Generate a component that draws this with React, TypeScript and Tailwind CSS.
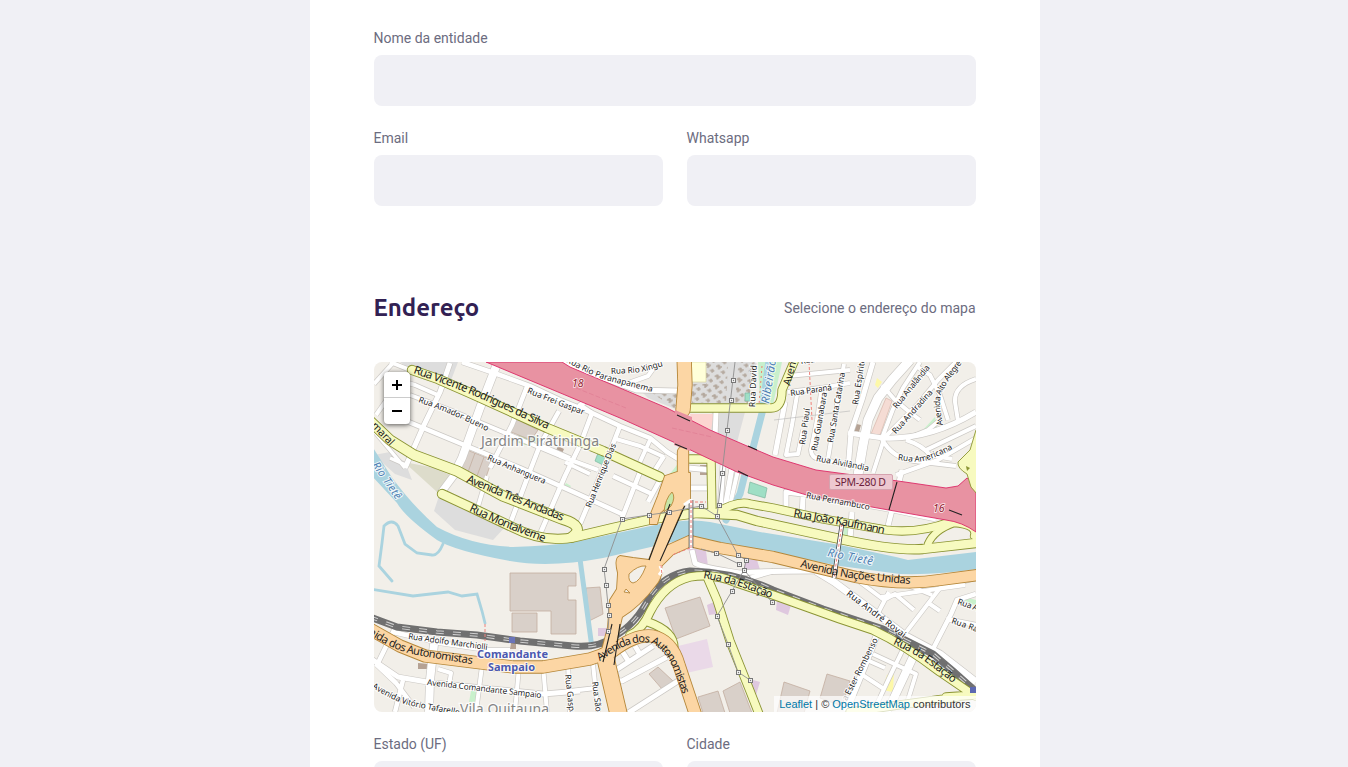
import React from "react";

type Kind = "minor" | "secondary" | "primary";
type Road = { d: string; w: number; k: Kind };
type Label = { t: string; p: number[]; s?: number; c?: string; italic?: boolean };

const STYLE: Record<Kind, { fill: string; edge: string }> = {
  minor: { fill: "#ffffff", edge: "#cbc8c4" },
  secondary: { fill: "#f7fabf", edge: "#8b9434" },
  primary: { fill: "#fcd6a4", edge: "#b5873a" },
};

const minor: [number, string][] = [
  [8, "M497 364L480 408L462 458L453 476"],
  [5, "M450 363L440 392L424 425L405 468"],
  [4.5, "M462 362L497 374L530 386L560 400L590 412"],
  [4.5, "M528 384L512 425L490 468"],
  [4.5, "M559 411L540 445L528 476L510 524"],
  [4.5, "M592 413L580 445L565 476L540 534"],
  [4, "M374 384L392 364"],
  [4, "M390 362L440 382"],
  [4, "M388 377L415 385L440 396"],
  [4, "M410 395L450 410L503 432L560 456L598 470"],
  [4.5, "M404 420L457 442L520 468L578 494L622 514"],
  [4, "M376 415L388 398"],
  [3.5, "M374 431L405 468M390 458L408 466"],
  [7, "M455 474L440 494"],
  [4, "M487 476L477 510"],
  [4.5, "M590 412L620 426L650 438L667 452L680 460"],
  [4.5, "M592 398L580 405L592 413"],
  [4.5, "M620 426L606 462L580 524"],
  [4, "M616 439L640 446L664 457M650 440L640 462"],
  [4, "M565 462L590 474M540 445L570 458"],
  [4.5, "M664 456L655 470M613 476L652 494M640 472L622 518M661 478L648 502"],
  [5, "M563 363L600 377L636 390L677 391"],
  [4, "M658 362L648 376L620 386"],
  [5, "M688 488L712 488M689 468L710 470"],
  [5, "M716 412L715 438M723 465L720 510M732 468L725 508"],
  [4, "M738 470L730 505"],
  [9, "M910 360L892 380L878 398L868 420L863 445L858 475"],
  [4, "M788 392L820 388L850 383M788 376L850 370"],
  [4, "M797 395L792 425L786 455L798 454L803 430"],
  [4, "M822 386L817 420L811 450Q811 458 820 459L850 465"],
  [4, "M844 364L836 410L828 459"],
  [5, "M873 362L862 400L851 432L848 470"],
  [5, "M785 402L775 455"],
  [5, "M848 433L883 438Q930 440 976 412"],
  [4, "M920 362L903 388L893 409L882 438M882 385L895 400L907 410L920 420"],
  [4, "M956 362L938 380L918 404L884 438M938 400L940 420L928 430L906 439"],
  [4, "M916 366L930 375L940 395L948 420"],
  [4, "M976 379Q954 386 955 402L958 421"],
  [4, "M882 439Q892 458 914 461L956 466M926 450L976 426M906 440Q922 445 930 455L952 459M884 439L873 473M896 475L938 460L976 438"],
  [5, "M786 507V492L810 495L888 509L936 519"],
  [5, "M902 470L888 526M852 512L850 540M803 497L802 516"],
  [5, "M692 550L695 563Q700 567 740 573Q760 571 816 571"],
  [7, "M816 571L834 582L873 611L906 636L940 654L976 682"],
  [4.5, "M774 571L740 581L765 587"],
  [4, "M860 582L884 600L895 594L914 610M905 584L932 595M976 578L940 588L904 635M889 592L878 613M927 602L940 611"],
  [4.5, "M976 594L957 600L951 614L933 649M976 625L946 619"],
  [4, "M881 597L965 585"],
  [6, "M878 632L864 668L846 712"],
  [4, "M905 645L891 674L876 706M873 654L916 674L907 703M858 672L884 689M867 660L885 668"],
  [8, "M914 655L892 702L885 714"],
  [4.5, "M395 628L376 667M393 632L440 643L488 650L510 650"],
  [5, "M370 658L398 677L433 683L543 694L580 691"],
  [4.5, "M377 665L396 683L414 707M403 680L395 712"],
  [8, "M434 644L430 680L429 712"],
  [4, "M438 669L451 673L449 685M482 666L476 712M519 667L515 712M543 666L547 712M568 662L570 712M593 664L598 712M570 691L596 688"],
  [5, "M653 646L616 670Q615 682 622 681L667 657M628 713L678 681M622 651L629 662M635 646L641 656"],
];

const secondary: [number, string][] = [
  [9, "M412 370L438 379L470 393L547 428L603 451L660 477"],
  [10, "M369 420L390 440L414 455L457 471L503 496L562 519Q586 526 572 537"],
  [9, "M442 494L470 507L510 526Q545 544 575 537L613 528L653 519L697 513L737 515L757 521L840 539Q895 551 923 549L976 543"],
  [8, "M716 513Q738 500 750 504L773 508L823 519L886 530Q918 534 950 522"],
  [7, "M928 544Q934 530 954 523Q978 525 974 536"],
  [8, "M689 408H771Q782 408 782 390L794 362"],
  [8, "M690 459H711L712 512"],
  [8, "M630 635Q642 630 650 612Q665 583 690 577Q715 573 737 583L773 595L840 619L873 630Q905 645 940 672L975 696M946 697L976 695M850 712L906 704L958 697M648 622Q674 631 674 648"],
  [8, "M708 579L717 600L730 641L750 691L759 714"],
];

const primary: [number, string][] = [
  [14, "M684 355L685 385L683 410"],
  [11, "M683 452V482"],
  [12, "M368 628L400 646L425 656L473 662L513 667L543 667L590 659L613 651Q635 634 652 636Q672 640 679 665L696 716"],
  [11, "M652 568L670 550L690 541L720 548L773 557L856 577Q904 586 940 580L978 575"],
  [17, "M605 656L619 716"],
];

const INTERCHANGE =
  "M677 472L665 476L658 496L650 516V524H657L660 513L670 504L649 560L633 558L620 556Q614 558 618 573L617 589L610 600L608 627L602 650L606 668L614 652L622 617Q640 606 655 586Q665 575 660 561L682 509L690 499V473Z";

const roads: Road[] = [
  ...minor.map(([w, d]) => ({ w, d, k: "minor" as Kind })),
  ...secondary.map(([w, d]) => ({ w, d, k: "secondary" as Kind })),
  ...primary.map(([w, d]) => ({ w, d, k: "primary" as Kind })),
];

const buildings = [
  "M510 573H576V586H568V600H576V634H551V611H510Z",
  "M512 613H537V632H512Z",
  "M586 588L600 587L603 614L589 621Z",
  "M665 608L700 597L710 626L676 639Z",
  "M698 697L718 691L725 713H703Z",
  "M723 691L740 682L752 713H730Z",
  "M649 674L658 667L673 681L662 689Z",
  "M784 682L810 691L804 713H777Z",
  "M827 674L850 681L842 706L820 698Z",
  "M467 450L492 460L485 480L460 470Z",
  "M514 418L538 430L531 440L511 432Z",
];

const labels: Label[] = [
  { t: "Rua Vicente Rodrigues da Silva", p: [413, 373, 470, 394, 547, 429], s: 11.5 },
  { t: "Rua Amador Bueno", p: [418, 402, 450, 414, 487, 431] },
  { t: "Rua Frei Gaspar", p: [527, 393, 583, 415] },
  { t: "Rua Rio Paranapanema", p: [566, 362, 600, 378, 652, 392] },
  { t: "Rua Rio Xingu", p: [611, 374, 640, 372, 663, 366] },
  { t: "Rua Anhanguera", p: [487, 460, 544, 484] },
  { t: "Rua Henrique Dias", p: [591, 508, 616, 445] },
  { t: "Avenida Três Andadas", p: [466, 482, 510, 500, 562, 521], s: 11.5 },
  { t: "Rua Montalverne", p: [469, 511, 500, 525, 544, 542], s: 11.5 },
  { t: "maral", p: [371, 426, 390, 446], s: 10.5 },
  { t: "Rua David S", p: [755, 407, 757, 358] },
  { t: "Avenida", p: [790, 386, 800, 348], s: 10.5 },
  { t: "Rua Paraná", p: [791, 396, 832, 390] },
  { t: "Rua", p: [801, 364, 815, 362] },
  { t: "Rua Piauí", p: [805, 445, 810, 409] },
  { t: "Rua Guanabara", p: [817, 451, 827, 393] },
  { t: "Rua Santa Catarina", p: [833, 443, 845, 373] },
  { t: "Rua Espírito Santo", p: [858, 405, 869, 334] },
  { t: "Rua Analândia", p: [897, 409, 930, 368] },
  { t: "Rua Andradina", p: [896, 434, 933, 393] },
  { t: "Avenida Alto Alegre", p: [943, 425, 941, 395, 962, 363] },
  { t: "Rua Alvilândia", p: [816, 461, 868, 471] },
  { t: "Rua Americana", p: [898, 460, 924, 461, 953, 449] },
  { t: "Rua Pernambuco", p: [806, 498, 869, 510] },
  { t: "Rua João Kaufmann", p: [793, 517, 840, 525, 884, 534], s: 11.5 },
  { t: "Avenida Nações Unidas", p: [800, 567, 850, 578, 910, 584], s: 11 },
  { t: "Rua da Estação", p: [703, 578, 735, 585, 771, 598], s: 11 },
  { t: "Rua André Rovai", p: [846, 595, 903, 638], s: 9 },
  { t: "Rua da Estação", p: [893, 644, 920, 658, 953, 683], s: 11 },
  { t: "Rua A", p: [957, 604, 977, 611] },
  { t: "Rua Ra", p: [951, 623, 977, 632] },
  { t: "a Ester Rombenso", p: [847, 701, 878, 640] },
  { t: "Rua Adolfo Marchiolli", p: [408, 639, 487, 650] },
  { t: "nida dos Autonomistas", p: [368, 634, 405, 652, 472, 664], s: 11 },
  { t: "Avenida dos Autonomistas", p: [600, 661, 625, 646, 650, 643, 669, 660, 683, 695], s: 11 },
  { t: "Avenida Comandante Sampaio", p: [427, 685, 541, 698] },
  { t: "Avenida Vitório Tafarelle", p: [372, 688, 405, 704, 459, 715] },
  { t: "Rua Gaspar", p: [565, 675, 570, 719] },
  { t: "Rua São", p: [592, 682, 596, 712] },
  { t: "Rio Tietê", p: [372, 465, 396, 500], s: 11, c: "#4d80b3", italic: true },
  { t: "Rio Tietê", p: [827, 556, 872, 565], s: 11.5, c: "#4d80b3", italic: true },
  { t: "Ribeirão", p: [769, 404, 776, 360], s: 11.5, c: "#4d80b3", italic: true },
];

const pylons = [
  [733, 380], [731, 400], [727, 430], [722, 473], [701, 506], [719, 505], [717, 516], [669, 512],
  [649, 515], [622, 519], [604, 569], [606, 585], [608, 605], [609, 615], [608, 631], [716, 553],
  [738, 555], [746, 560], [739, 564], [744, 570], [732, 591], [717, 616], [728, 644], [738, 672],
  [750, 680], [772, 602],
];

/** Smooth curve through the given points, extended a little past the last one. */
function curve(p: number[]) {
  const n = p.length / 2;
  const at = (i: number) => {
    const j = Math.min(n - 1, Math.max(0, i));
    return [p[2 * j], p[2 * j + 1]];
  };
  let d = `M${p[0]} ${p[1]}`;
  for (let i = 0; i < n - 1; i++) {
    const [a, b, c, e] = [at(i - 1), at(i), at(i + 1), at(i + 2)];
    d += `C${b[0] + (c[0] - a[0]) / 6} ${b[1] + (c[1] - a[1]) / 6} ${c[0] - (e[0] - b[0]) / 6} ${c[1] - (e[1] - b[1]) / 6} ${c[0]} ${c[1]}`;
  }
  const [a, b] = [at(n - 2), at(n - 1)];
  return d + `l${(b[0] - a[0]) / 8} ${(b[1] - a[1]) / 8}`;
}

function MapLabel({ label, id }: { label: Label; id: string }) {
  const { p, t, s = 8.4, c = "#1c1c1c", italic } = label;
  let len = 0;
  for (let i = 2; i < p.length; i += 2) len += Math.hypot(p[i] - p[i - 2], p[i + 1] - p[i - 1]);
  const halo = italic || s < 10;
  return (
    <>
      <path id={id} d={curve(p)} fill="none" />
      <text
        fontSize={s}
        fill={c}
        stroke={halo ? "#fff" : "none"}
        strokeOpacity=".8"
        strokeWidth="2"
        paintOrder="stroke"
        fontStyle={italic ? "italic" : "normal"}
        textLength={len}
      >
        <textPath href={"#" + id} textLength={len}>{t}</textPath>
      </text>
    </>
  );
}

function RoadLayer({ kind }: { kind: Kind }) {
  const list = roads.filter((r) => r.k === kind);
  const { edge, fill } = STYLE[kind];
  return (
    <g fill="none" strokeLinejoin="round" strokeLinecap={kind === "minor" ? "butt" : "round"}>
      {list.map((r, i) => (
        <path key={"e" + i} d={r.d} stroke={edge} strokeWidth={r.w + 1.3} />
      ))}
      {kind === "primary" && <path d={INTERCHANGE} stroke={edge} strokeWidth="1.8" />}
      {list.map((r, i) => (
        <path key={"f" + i} d={r.d} stroke={fill} strokeWidth={kind === "minor" ? r.w : r.w - 0.5} />
      ))}
      {kind === "primary" && <path d={INTERCHANGE} fill={fill} />}
    </g>
  );
}

const RAIL =
  "M370 617L397 627L437 632L477 635L520 641L573 646Q600 648 613 637Q636 625 650 596Q665 574 690 571Q735 572 773 590L823 609L883 629L933 654L953 671L980 695";

function StreetMap() {
  return (
    <svg viewBox="374 362 602 350" className="block h-full w-full" fontFamily='"Noto Sans", sans-serif'>
      <defs>
        <pattern id="graves" width="11" height="10" patternUnits="userSpaceOnUse" patternTransform="rotate(8)">
          <path d="M1 3H7M4 1V6M2.5 1.500L5.500 5M6.500 8H11M9 6V10" stroke="#b3a79c" strokeWidth="1.5" />
        </pattern>
      </defs>
      <rect x="374" y="362" width="602" height="350" fill="#f2efe9" />
      <g fill="#dddddd">
        <path d="M400 362H458L450 383L425 380Z" />
        <path d="M439 496L506 526L493 540L455 530L434 511Z" />
        <path d="M690 362H757L745 405H690ZM712 412H745L735 450L710 432Z" />
        <path d="M640 390L677 392L678 410L648 398Z" />
        <path d="M374 455L390 452L405 462L412 480L395 474Z" />
      </g>
      <path d="M404 462L435 468L452 476L437 492Z" fill="#dddccb" />
      <path d="M706 362H728L726 403H692V384H706ZM738 362H756L748 403H735ZM645 388H678V411Z" fill="url(#graves)" />
      <path d="M690 362H706V382H690Z" fill="#ffffd9" stroke="#d8d6a0" strokeWidth=".7" />
      <path d="M758 362H782L773 405H760Z" fill="#c8f0cc" />
      <path d="M762 366L759 405" stroke="#ef8170" strokeWidth="1" strokeDasharray="2 3" />
      <path d="M690 414H714L711 430L692 421Z" fill="#fcd5d1" />
      <path d="M886 398L892 401L880 435L871 434Z" fill="#f5dcd4" stroke="#d9b6ab" strokeWidth=".7" />
      <g fill="#c9f1cc">
        <path d="M521 428L538 438L533 447L516 442Z" fill="#addf9c" />
        <path d="M935 417L938 432L921 432Z" />
        <path d="M673 470L680 461V476H668ZM566 483L571 486L568 490L563 488ZM471 691H478V702H469ZM844 527L850 529L848 538L843 536ZM964 597L976 600V605L965 603Z" />
      </g>
      <path d="M598 453L606 457L603 465L595 461ZM750 482L767 488L765 498L748 493ZM745 393H750V401H745Z" fill="#9fdfc5" stroke="#7db69e" strokeWidth=".7" />
      <g fill="#dfc8df">
        <path d="M687 547L706 551L708 566L695 564ZM746 559L757 560L761 573L743 573ZM707 605L714 602L717 614L709 615ZM753 680L760 682L756 695L750 690ZM777 600L791 605L788 615L776 610ZM598 628H608V636H598Z" />
        <path d="M678 646L707 639L713 667L682 674Z" fill="#ead9e8" />
      </g>
      <g fill="#d9d0c9" stroke="#c3ada0" strokeWidth=".8">
        {buildings.map((d) => (
          <path key={d} d={d} />
        ))}
        <path d="M475 453L468 472M484 457L477 476" />
      </g>
      <path d="M852 423L861 425L859 432L851 430ZM558 446L564 449L560 458L554 455ZM511 643H516V649H510ZM700 465H707V475H700ZM418 663L429 664V669H418Z" fill="#b5a294" />
      <path d="M887 675L894 671L893 692L882 690ZM877 378L882 382L878 388L875 385Z" fill="#fdf8a8" />
      <g fill="none" stroke="#aad3df" strokeLinecap="round">
        <path
          d="M443 544Q438 556 432 555L417 553L405 544L398 526Q392 518 384 526L382 543L379 566L392 581M370 589L413 596L448 592L462 596L477 594L482 611L485 623"
          strokeWidth="2.800"
        />
        <path d="M580 559L585 596L592 648" strokeWidth="5" strokeLinecap="butt" />
        <path d="M769 360L762 413L753 448M745 474L740 494L726 520" strokeWidth="7" />
      </g>
      <path
        d="M370 443L391 476Q410 503 437 527Q470 545 513 547Q550 546 575 542L660 524Q690 518 710 522L760 532L840 545L896 557L908 560L976 552V569Q940 575 900 574L840 566L760 550L690 538L603 558Q550 568 510 561Q455 551 437 540Q405 517 397 503L370 474Z"
        fill="#aad3df"
      />
      <RoadLayer kind="minor" />
      <path d={RAIL} fill="none" stroke="#707070" strokeWidth="7" />
      <path d={RAIL} fill="none" stroke="#d0d0d0" strokeWidth="3.4" strokeDasharray="8 9" />
      <path d={RAIL} fill="none" stroke="#707070" strokeWidth="1.3" />
      <RoadLayer kind="secondary" />
      <path
        d="M486 362H562L570 367L620 388L667 408L710 430L747 446L773 457L816 470L898 481L946 488L958 486L967 478L976 484V532Q962 522 946 520L900 512L810 496L773 485L737 472L680 445L620 418L570 397Z"
        fill="#e892a2"
        stroke="#dc2a67"
        strokeWidth=".9"
      />
      <path d="M976 430L970 450L958 462Q957 468 967 474L971 487L977 494Z" fill="#f7fabf" />
      <path d="M976 430L970 450L958 462Q957 468 967 474L971 487L977 494" fill="none" stroke="#8b9434" strokeWidth=".9" />
      <path d="M966 466L970 468L967 471Z" fill="#8b9434" />
      <path d="M576 388L626 408M672 428L712 437" stroke="#dd7890" strokeWidth=".6" strokeDasharray="5 2" />
      <RoadLayer kind="primary" />
      <path d="M675 410L692 417V424L675 417ZM674 441L690 448V451L674 445Z" fill="#e892a2" />
      <g stroke="#b5873a" strokeWidth=".9" strokeLinejoin="round">
        <path d="M672 492Q676 497 671 506L664 512Q665 499 672 492Z" fill="#c8e6a8" />
        <path d="M629 574Q638 565 646 566Q640 582 633 583Q628 582 629 574ZM626 589L630 593L624 592Z" fill="#f2efe9" />
      </g>
      <path
        d="M670 504L649 560M686 503L660 561M677 415L690 421M675 444L687 449M612 624L603 662M620 624L614 665M748 446L757 450M738 471L748 476M897 482L889 510M949 510L962 515"
        stroke="#222"
        strokeWidth="1.1"
        fill="none"
      />
      <path d="M691 500V548M842 524L834 578" stroke="#444" strokeWidth="4.600" />
      <path d="M691 499V549M842 524L834 578M691 500L684 505M660 566L662 571L659 575" stroke="#fff" strokeWidth="3" fill="none" />
      <path
        d="M691 500V548M842 524L834 578M690 502H706M661 565L662 575M690 548L672 555M809 362L812 420M485 624V641"
        stroke="#f0827c"
        strokeWidth="1"
        strokeDasharray="3 2"
        fill="none"
      />
      <path
        d="M735 362L727 430L722 473L717 516L701 506L669 512L622 519L604 569L606 585L609 615L608 631M717 516L738 555L746 560L744 570L732 591L717 616L728 644L738 672L750 680M701 549L716 553L739 564M744 570L772 602"
        stroke="#8f8f8f"
        strokeWidth=".9"
        fill="none"
      />
      <path d="M774 420L850 411" stroke="#b5b5b5" strokeWidth=".6" />
      {pylons.map(([x, y]) => (
        <g key={`${x}-${y}`}>
          <rect x={x - 1.5} y={y - 1.5} width="4" height="4" fill="#f4f4f4" stroke="#777" strokeWidth="1" />
          <circle cx={x + 0.5} cy={y + 0.5} r=".7" fill="#777" />
        </g>
      ))}
      <rect x="509" y="637" width="6" height="6" fill="#6a74b8" />
      <rect x="970" y="687" width="6" height="6" fill="#5d69b1" />
      {labels.map((l, i) => (
        <MapLabel key={i} label={l} id={`street-${i}`} />
      ))}
      <g paintOrder="stroke" stroke="#fff" strokeWidth="2.500" strokeOpacity=".75" fill="#858585" fontSize="14">
        <text x="481" y="446" textLength="118">Jardim Piratininga</text>
        <text x="460" y="714" textLength="89">Vila Quitauna</text>
      </g>
      <g paintOrder="stroke" stroke="#fff" strokeWidth="2" strokeOpacity=".8" fill="#4a58b0" fontWeight="700" fontSize="11">
        <text x="477" y="658" textLength="71">Comandante</text>
        <text x="488" y="671" textLength="47">Sampaio</text>
      </g>
      <g paintOrder="stroke" stroke="#fff" strokeWidth="1.600" strokeOpacity=".8" fill="#96202f" fontStyle="italic" fontSize="10.500">
        <text x="572" y="387">18</text>
        <text x="933" y="512">16</text>
      </g>
      <rect x="829.5" y="474.500" width="63" height="15" rx="1.500" fill="#edc8d0" stroke="#d5a3af" />
      <text x="835" y="486" fontSize="10.500" fill="#6c1d3b" textLength="51">SPM-280 D</text>
    </svg>
  );
}

function Field({ label }: { label: string }) {
  return (
    <label className="flex flex-col gap-2 text-[14px] leading-[17px] text-[#6c6c80]">
      <span>{label}</span>
      <input className="h-[51px] w-full rounded-lg bg-[#f0f0f5] px-6 outline-none" />
    </label>
  );
}

export default function App() {
  return (
    <div className="h-[767px] overflow-hidden bg-[#f0f0f5] font-['Roboto',sans-serif] text-[#6c6c80]">
      <form className="ml-[309.5px] flex h-[840px] w-[730px] flex-col bg-white px-16 pt-[30px]">
        <div className="flex flex-col gap-6">
          <Field label="Nome da entidade" />
          <div className="grid grid-cols-2 gap-6">
            <Field label="Email" />
            <Field label="Whatsapp" />
          </div>
        </div>
        <div className="mt-[84px] flex h-9 items-center justify-between">
          <h2 className="font-['Ubuntu','Noto_Sans',sans-serif] text-[24px] leading-none font-bold text-[#322153]">
            Endereço
          </h2>
          <span className="text-[14px]">Selecione o endereço do mapa</span>
        </div>
        <div className="relative mt-9 h-[350px] shrink-0 overflow-hidden rounded-lg">
          <StreetMap />
          <div className="absolute top-[10px] left-[10px] flex w-[26px] flex-col overflow-hidden rounded bg-white text-black shadow-[0_1px_5px_rgba(0,0,0,0.65)]">
            <button type="button" aria-label="Zoom in" className="flex h-[26px] items-center justify-center border-b border-[#ccc]">
              <svg viewBox="0 0 10 10" className="size-[10px]">
                <path d="M0 5H10M5 0V10" stroke="#000" strokeWidth="2" />
              </svg>
            </button>
            <button type="button" aria-label="Zoom out" className="flex h-[26px] items-center justify-center">
              <svg viewBox="0 0 10 10" className="size-[10px]">
                <path d="M0 5H10" stroke="#000" strokeWidth="2" />
              </svg>
            </button>
          </div>
          <div className="absolute right-0 bottom-0 bg-white/70 px-[5px] font-['Liberation_Sans',sans-serif] text-[11px] leading-4 whitespace-nowrap text-[#333]">
            <span className="text-[#0078a8]">Leaflet</span> | © <span className="text-[#0078a8]">OpenStreetMap</span> contributors
          </div>
        </div>
        <div className="mt-6 grid grid-cols-2 gap-6">
          <Field label="Estado (UF)" />
          <Field label="Cidade" />
        </div>
      </form>
    </div>
  );
}
